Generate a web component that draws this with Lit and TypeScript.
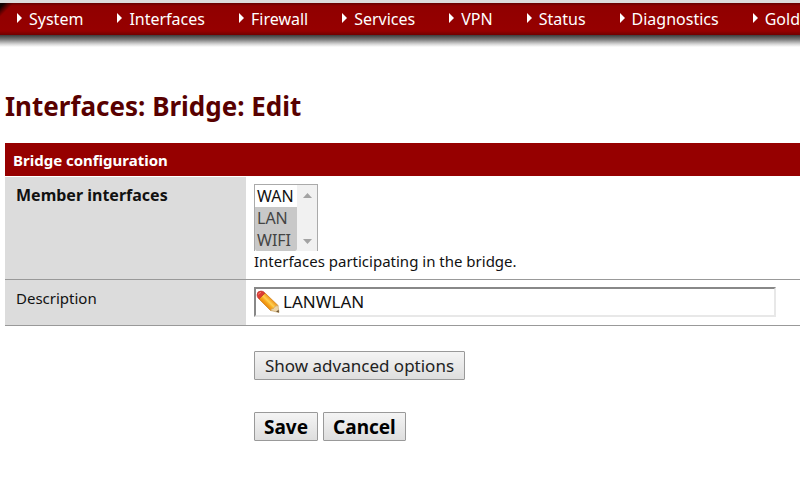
import { LitElement, html, css, svg } from "lit";
import { customElement, property, state } from "lit/decorators.js";

@customElement("nav-bar")
class NavBar extends LitElement {
  @property({ attribute: false }) items: string[] = [];

  static styles = css`
    :host {
      display: block;
      border-top: 3px solid #dcdcdc;
    }
    .bar {
      display: flex;
      gap: 34px;
      height: 32px;
      padding-left: 17px;
      overflow: hidden;
      box-sizing: border-box;
      background: linear-gradient(135deg, #100 3px, #4a0000 6px, transparent 10px),
        linear-gradient(#600 0, #900000 3px, #960000 28px, #700000 100%);
    }
    .shade {
      height: 12px;
      background: linear-gradient(#3c3c3c, #777 35%, #d4d4d4 75%, #fff);
    }
    .link {
      display: flex;
      align-items: center;
      gap: 7px;
      flex: none;
      color: #fff;
      font-size: 16px;
      line-height: 32px;
      text-decoration: none;
    }
    .arrow {
      width: 5px;
      height: 10px;
      fill: #fff;
      margin-bottom: 2px;
    }
  `;

  render() {
    return html`
      <nav class="bar">
        ${this.items.map(
          (name) => html`<a class="link" href="#"
            ><svg class="arrow" viewBox="0 0 5 10" aria-hidden="true"><path d="M0 0L5 5L0 10Z" /></svg>${name}</a
          >`
        )}
      </nav>
      <div class="shade"></div>
    `;
  }
}

const pencil = svg`
  <defs>
    <linearGradient id="wood" gradientUnits="userSpaceOnUse" x1="10" y1="16" x2="16" y2="10">
      <stop offset="0" stop-color="#e8860c" />
      <stop offset="0.35" stop-color="#f8a81c" />
      <stop offset="0.6" stop-color="#ffd050" />
      <stop offset="1" stop-color="#f0981c" />
    </linearGradient>
  </defs>
  <path d="M3 9L9 3L22 15.500Q22 19 18 20.500L14.500 20.500Z" fill="url(#wood)" stroke="#cc7c14" stroke-width="0.7" />
  <path d="M22 15.500L23 22.500L14.500 20.500Q15 18.500 17.500 18.500Q18.500 15.500 22 15.500Z" fill="#ecd3a4" stroke="#c09c60" stroke-width="0.6" />
  <path d="M23 22.500L20 21.800L22.600 19.800Z" fill="#6c5434" />
  <path d="M1 5Q1 1 5 1Q7.500 1 9 3L3 9Q1 7.500 1 5Z" fill="#dc3c34" stroke="#bc3028" stroke-width="0.6" />
  <path d="M2.500 4.500Q3 2.500 5 2.500" fill="none" stroke="#f48878" stroke-width="1" />
`;

@customElement("app-root")
class AppRoot extends LitElement {
  @state() private members = [
    { name: "WAN", on: false },
    { name: "LAN", on: true },
    { name: "WIFI", on: true },
  ];

  static styles = css`
    :host {
      display: block;
      font-family: "Noto Sans", "Open Sans", sans-serif;
      font-size: 15px;
      line-height: 20px;
      color: #111;
      background: #fff;
      overflow: hidden;
    }
    .title {
      margin: 41px 0 18px 5px;
      font-size: 26px;
      line-height: 37px;
      color: #580000;
    }
    .form {
      margin-left: 5px;
    }
    .table {
      width: 100%;
      border-collapse: separate;
      border-spacing: 0;
    }
    .head {
      height: 34px;
      padding: 0 8px;
      text-align: left;
      color: #fff;
      background: #960000;
      background-clip: padding-box;
      border-bottom: 1px solid #fff;
      box-sizing: border-box;
    }
    .label,
    .value {
      vertical-align: top;
      text-align: left;
      font-weight: normal;
      border-bottom: 1px solid #999;
    }
    .label {
      width: 241px;
      box-sizing: border-box;
      padding: 8px 11px;
      background: #dcdcdc;
    }
    .required {
      font-size: 16px;
      font-weight: bold;
    }
    .value {
      padding: 7px 8px 8px;
    }
    .listbox {
      display: flex;
      width: 64px;
      height: 67px;
      box-sizing: border-box;
      border: 1px solid #aaa;
      border-bottom: 0;
    }
    .select {
      flex: 1;
      min-width: 0;
      height: 66px;
      padding: 0;
      border: 0;
      outline: 0;
      overflow: hidden;
      font: inherit;
      font-size: 16px;
      background: #fff;
      scrollbar-width: none;
    }
    .option {
      height: 22px;
      min-height: 22px;
      padding: 0 2px;
      line-height: 22px;
      box-sizing: border-box;
      color: #111;
    }
    .option:checked {
      color: #444;
      background: linear-gradient(#c8c8c8, #c8c8c8);
    }
    .scroll {
      display: flex;
      flex-direction: column;
      justify-content: space-between;
      align-items: center;
      width: 20px;
      padding: 8px 0 7px;
      box-sizing: border-box;
      background: #f1f1f1;
    }
    .tri {
      width: 9px;
      height: 5px;
      fill: #a3a3a3;
    }
    .field {
      display: flex;
      align-items: center;
      width: calc(100% - 16px);
      height: 30px;
      box-sizing: border-box;
      border: 2px solid;
      border-color: #888 #e8e8e8 #e8e8e8 #888;
    }
    .pencil {
      width: 24px;
      height: 24px;
      flex: none;
    }
    .input {
      flex: 1;
      min-width: 0;
      padding: 0 3px;
      border: 0;
      outline: 0;
      font: inherit;
      font-size: 17px;
      line-height: 24px;
      color: #111;
      background: transparent;
    }
    .actions {
      display: flex;
      flex-wrap: wrap;
      gap: 5px;
      margin: 25px 0 32px 249px;
    }
    .button {
      height: 29px;
      padding: 0 10px;
      border: 1px solid #999;
      border-radius: 1px;
      font: inherit;
      font-size: 17px;
      line-height: 26px;
      color: #222;
      background: linear-gradient(#f4f4f4, #dedede);
    }
    .strong {
      padding: 0 9px;
      font-size: 19px;
      font-weight: bold;
      color: #000;
    }
  `;

  render() {
    return html`
      <nav-bar
        .items=${["System", "Interfaces", "Firewall", "Services", "VPN", "Status", "Diagnostics", "Gold"]}
      ></nav-bar>
      <main>
        <h1 class="title">Interfaces: Bridge: Edit</h1>
        <form class="form" @submit=${(e: Event) => e.preventDefault()}>
          <table class="table">
            <thead>
              <tr><th class="head" colspan="2">Bridge configuration</th></tr>
            </thead>
            <tbody>
              <tr>
                <th class="label required" scope="row"><label for="members">Member interfaces</label></th>
                <td class="value">
                  <div class="listbox">
                    <select class="select" id="members" multiple size="3">
                      ${this.members.map(
                        (m) => html`<option class="option" ?selected=${m.on}>${m.name}</option>`
                      )}
                    </select>
                    <div class="scroll" aria-hidden="true">
                      <svg class="tri" viewBox="0 0 9 5"><path d="M0 5L4.500 0L9 5Z" /></svg>
                      <svg class="tri" viewBox="0 0 9 5"><path d="M0 0L4.500 5L9 0Z" /></svg>
                    </div>
                  </div>
                  Interfaces participating in the bridge.
                </td>
              </tr>
              <tr>
                <th class="label" scope="row"><label for="descr">Description</label></th>
                <td class="value">
                  <div class="field">
                    <svg class="pencil" viewBox="0 0 24 24" aria-hidden="true">${pencil}</svg>
                    <input class="input" id="descr" type="text" value="LANWLAN" />
                  </div>
                </td>
              </tr>
            </tbody>
          </table>
          <div class="actions">
            <button class="button" type="button">Show advanced options</button>
          </div>
          <div class="actions">
            <button class="button strong" type="submit">Save</button>
            <button class="button strong" type="button">Cancel</button>
          </div>
        </form>
      </main>
    `;
  }
}
